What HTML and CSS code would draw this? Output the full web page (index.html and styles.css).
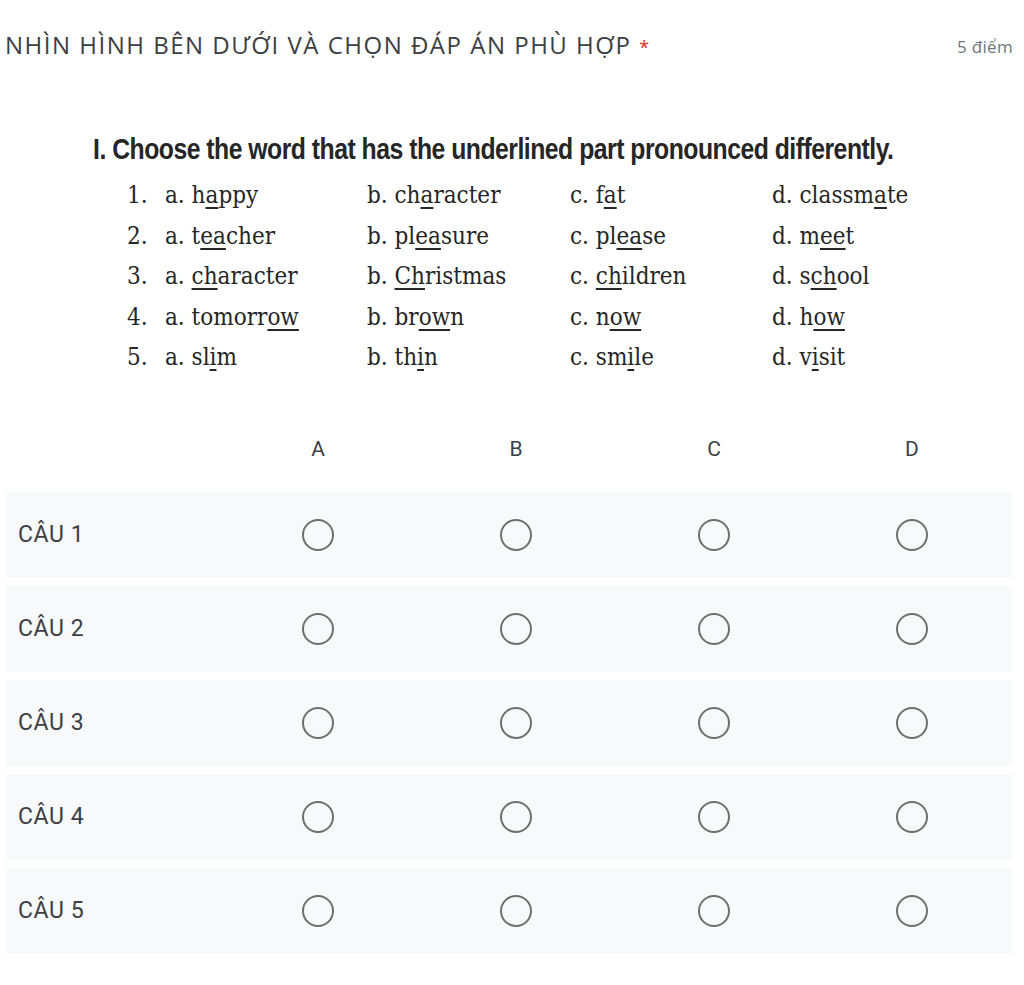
FILE: index.html
```html
<!DOCTYPE html>
<html lang="vi">
<head>
<meta charset="utf-8">
<title>Câu hỏi</title>
<link rel="stylesheet" href="styles.css">
</head>
<body>
<div class="question">
  <div class="q-head">
    <div class="q-title">NHÌN HÌNH BÊN DƯỚI VÀ CHỌN ĐÁP ÁN PHÙ HỢP <span class="req">*</span></div>
    <div class="q-points">5 điểm</div>
  </div>

  <div class="picture">
    <div class="pic-title"><span class="narrow">I. Choose the word that has the underlined part pronounced differently.</span></div>
    <div class="pic-grid">
      <span>1.</span><span>a. h<u>a</u>ppy</span><span>b. ch<u>a</u>racter</span><span>c. f<u>a</u>t</span><span>d. classm<u>a</u>te</span>
      <span>2.</span><span>a. t<u>ea</u>cher</span><span>b. pl<u>ea</u>sure</span><span>c. pl<u>ea</u>se</span><span>d. m<u>ee</u>t</span>
      <span>3.</span><span>a. <u>ch</u>aracter</span><span>b. <u>Ch</u>ristmas</span><span>c. <u>ch</u>ildren</span><span>d. s<u>ch</u>ool</span>
      <span>4.</span><span>a. tomorr<u>ow</u></span><span>b. br<u>ow</u>n</span><span>c. n<u>ow</u></span><span>d. h<u>ow</u></span>
      <span>5.</span><span>a. sl<u>i</u>m</span><span>b. th<u>i</u>n</span><span>c. sm<u>i</u>le</span><span>d. v<u>i</u>sit</span>
    </div>
  </div>

  <div class="matrix">
    <div class="m-head">
      <div class="m-label"></div>
      <div class="m-col">A</div>
      <div class="m-col">B</div>
      <div class="m-col">C</div>
      <div class="m-col">D</div>
    </div>
    <div class="m-row">
      <div class="m-label">CÂU 1</div>
      <div class="m-cell"><span class="radio"></span></div>
      <div class="m-cell"><span class="radio"></span></div>
      <div class="m-cell"><span class="radio"></span></div>
      <div class="m-cell"><span class="radio"></span></div>
    </div>
    <div class="m-row">
      <div class="m-label">CÂU 2</div>
      <div class="m-cell"><span class="radio"></span></div>
      <div class="m-cell"><span class="radio"></span></div>
      <div class="m-cell"><span class="radio"></span></div>
      <div class="m-cell"><span class="radio"></span></div>
    </div>
    <div class="m-row">
      <div class="m-label">CÂU 3</div>
      <div class="m-cell"><span class="radio"></span></div>
      <div class="m-cell"><span class="radio"></span></div>
      <div class="m-cell"><span class="radio"></span></div>
      <div class="m-cell"><span class="radio"></span></div>
    </div>
    <div class="m-row">
      <div class="m-label">CÂU 4</div>
      <div class="m-cell"><span class="radio"></span></div>
      <div class="m-cell"><span class="radio"></span></div>
      <div class="m-cell"><span class="radio"></span></div>
      <div class="m-cell"><span class="radio"></span></div>
    </div>
    <div class="m-row">
      <div class="m-label">CÂU 5</div>
      <div class="m-cell"><span class="radio"></span></div>
      <div class="m-cell"><span class="radio"></span></div>
      <div class="m-cell"><span class="radio"></span></div>
      <div class="m-cell"><span class="radio"></span></div>
    </div>
  </div>
</div>
</body>
</html>
```

FILE: styles.css
```css
html, body {
  margin: 0;
  padding: 0;
  background: #ffffff;
}

body {
  font-family: Roboto, "Open Sans", "Liberation Sans", sans-serif;
  color: #3c4043;
}

.question {
  width: 1024px;
}

.q-head {
  display: flex;
  justify-content: space-between;
  align-items: center;
  padding: 34px 11px 0 5px;
  height: 24px;
}

.q-title {
  font-family: "Open Sans", Roboto, sans-serif;
  font-size: 24px;
  line-height: 24px;
  color: #3c4043;
  letter-spacing: 1.5px;
}

.req {
  color: #d93025;
  font-size: 18px;
}

.q-points {
  font-family: "Open Sans", Roboto, sans-serif;
  font-size: 17px;
  color: #70757a;
  letter-spacing: 0.3px;
}

.picture {
  margin-top: 72px;
  padding-left: 93px;
}

.pic-title {
  height: 38px;
  line-height: 38px;
  white-space: nowrap;
}

.narrow {
  display: inline-block;
  font-family: "Liberation Sans", Arial, sans-serif;
  font-weight: bold;
  font-size: 30px;
  color: #262626;
  transform: scaleX(0.825);
  transform-origin: left center;
  letter-spacing: -0.6px;
}

.pic-grid {
  display: grid;
  grid-template-columns: 38px 202px 203px 202px 160px;
  grid-auto-rows: 40.5px;
  margin-left: 34px;
  margin-top: 7px;
  font-family: "DejaVu Serif Condensed", "DejaVu Serif", "Liberation Serif", serif;
  font-size: 24px;
  color: #262626;
  align-items: center;
  white-space: nowrap;
}

.pic-grid u {
  text-decoration-thickness: 2px;
  text-underline-offset: 4px;
}

.matrix {
  margin-top: 57px;
  padding: 0 12px 0 6px;
}

.m-head,
.m-row {
  display: grid;
  grid-template-columns: 213px repeat(4, 198px);
  align-items: center;
}

.m-head {
  height: 28px;
  margin-bottom: 29px;
}

.m-col {
  text-align: center;
  font-size: 21px;
  color: #3c4043;
}

.m-row {
  height: 86px;
  background: #f8f9fa;
  margin-bottom: 8px;
}

.m-label {
  padding-left: 12px;
  font-size: 23px;
  color: #3c4043;
  letter-spacing: 0.6px;
}

.m-cell {
  display: flex;
  justify-content: center;
}

.radio {
  width: 28px;
  height: 28px;
  border: 2.5px solid #6f6f6f;
  border-radius: 50%;
  box-sizing: content-box;
}
```
